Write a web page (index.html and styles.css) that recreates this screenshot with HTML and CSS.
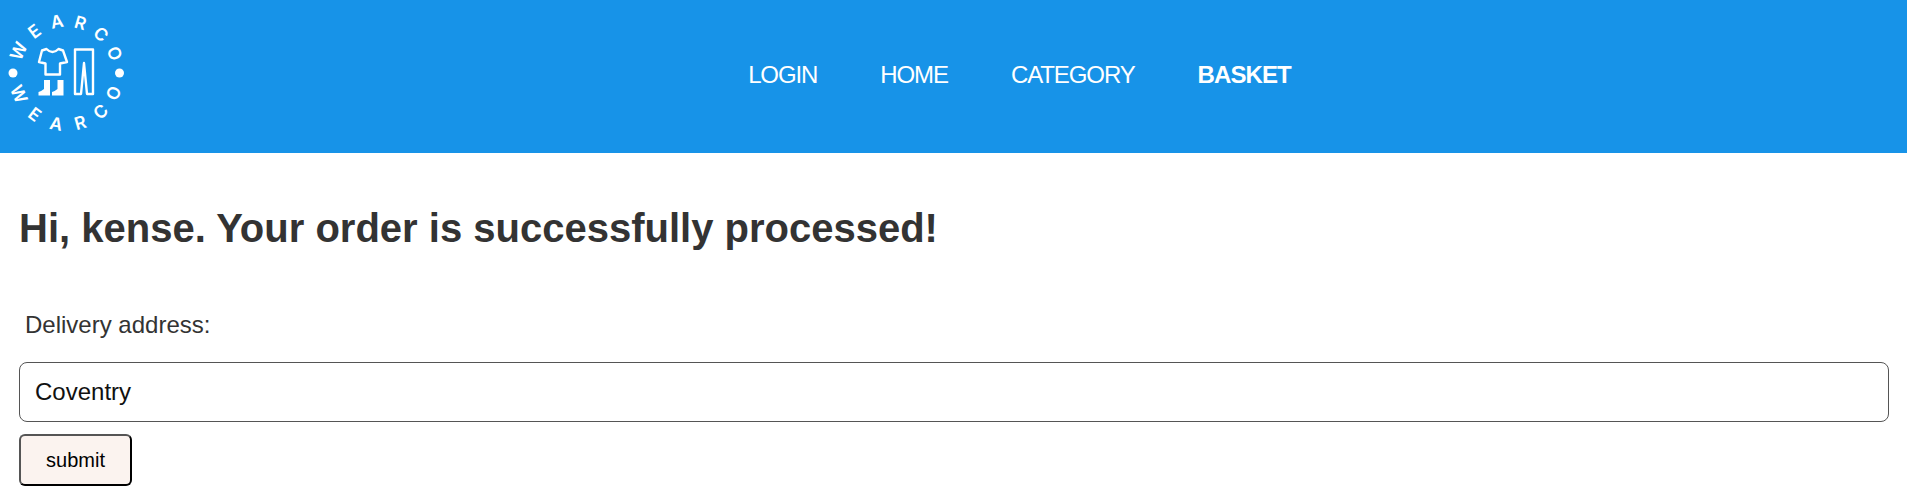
FILE: index.html
```html
<!DOCTYPE html>
<html lang="en">
<head>
<meta charset="utf-8">
<title>Wearco</title>
<link rel="stylesheet" href="styles.css">
</head>
<body>
<header class="header">
  <a class="logo" href="#">
    <svg class="logo-svg" width="132" height="152" viewBox="0 0 132 152">
      <g class="logo-letters">
        <text transform="translate(66 73) rotate(-65) translate(0 -46)">W</text>
        <text transform="translate(66 73) rotate(-37) translate(0 -46)">E</text>
        <text transform="translate(66 73) rotate(-10) translate(0 -46)">A</text>
        <text transform="translate(66 73) rotate(16) translate(0 -46)">R</text>
        <text transform="translate(66 73) rotate(42) translate(0 -46)">C</text>
        <text transform="translate(66 73) rotate(68) translate(0 -46)">O</text>
        <text transform="translate(66 73) rotate(66) translate(0 58)">W</text>
        <text transform="translate(66 73) rotate(37) translate(0 58)">E</text>
        <text transform="translate(66 73) rotate(11) translate(0 58)">A</text>
        <text transform="translate(66 73) rotate(-16) translate(0 58)">R</text>
        <text transform="translate(66 73) rotate(-42) translate(0 58)">C</text>
        <text transform="translate(66 73) rotate(-67) translate(0 58)">O</text>
      </g>
      <circle class="logo-fill" cx="13" cy="73" r="4.500"/>
      <circle class="logo-fill" cx="119.500" cy="73" r="4.500"/>
      <path class="logo-line" d="M46.500 49 L42 50.500 L39 62 L45.500 63.500 L45.500 74.500 L60 74.500 L60 63.500 L67 62 L63 50.500 L58.500 49 Q52.500 55 46.500 49 Z"/>
      <path class="logo-line" d="M75 49.500 H93 V94 H87 L84 63 L81 94 H75 Z"/>
      <path class="logo-fill" d="M44 80 H50 V95.500 H38.500 V92 Q41 91.500 44 89 Z"/>
      <path class="logo-fill" d="M57.500 80 H63.500 V95.500 H52 V92 Q54.500 91.500 57.500 89 Z"/>
    </svg>
  </a>
  <nav class="nav">
    <a class="nav-link" href="#">LOGIN</a>
    <a class="nav-link" href="#">HOME</a>
    <a class="nav-link" href="#">CATEGORY</a>
    <a class="nav-link nav-active" href="#">BASKET</a>
  </nav>
</header>
<main class="main">
  <h1 class="title">Hi, kense. Your order is successfully processed!</h1>
  <form class="form">
    <label class="label" for="address">Delivery address:</label>
    <input class="input" id="address" type="text" value="Coventry">
    <button class="submit" type="button">submit</button>
  </form>
</main>
</body>
</html>
```
FILE: styles.css
```css
* { box-sizing: border-box; }
html, body { margin: 0; padding: 0; }
body { font-family: "Liberation Sans", Arial, sans-serif; color: #333; background: #fff; overflow: hidden; }
.header { display: flex; align-items: flex-start; height: 153px; background: #1793e8; }
.logo { display: block; width: 132px; height: 152px; flex: none; }
.logo-svg { display: block; }
.logo-letters text { fill: #fff; font-family: Inter, sans-serif; font-size: 17.500px; font-weight: 600; text-anchor: middle; }
.logo-fill { fill: #fff; }
.logo-line { fill: none; stroke: #fff; stroke-width: 2.400; stroke-linejoin: round; }
.nav { flex: 1; display: flex; justify-content: center; gap: 63px; padding-top: 61px; }
.nav-link { color: #fff; text-decoration: none; font-size: 24px; line-height: 28px; letter-spacing: -1.100px; }
.nav-active { font-weight: 700; letter-spacing: -0.900px; }
.main { padding: 0 18px 0 19px; }
.title { margin: 52px 0 0; font-size: 40px; line-height: 46px; font-weight: 700; color: #333; }
.form { display: flex; flex-direction: column; align-items: flex-start; }
.label { margin: 61px 0 0 6px; font-size: 24px; line-height: 26px; color: #333; }
.input { width: 100%; height: 60px; margin-top: 24px; padding: 0 15px; border: 1px solid #555; border-radius: 8px; font-family: inherit; font-size: 24px; color: #111; background: #fff; }
.submit { width: 113px; height: 52px; margin-top: 12px; padding: 0; border: 2px solid; border-color: #555 #000 #000 #555; border-radius: 6px; background: #fbf3ef; font-family: inherit; font-size: 20px; color: #000; }
```
